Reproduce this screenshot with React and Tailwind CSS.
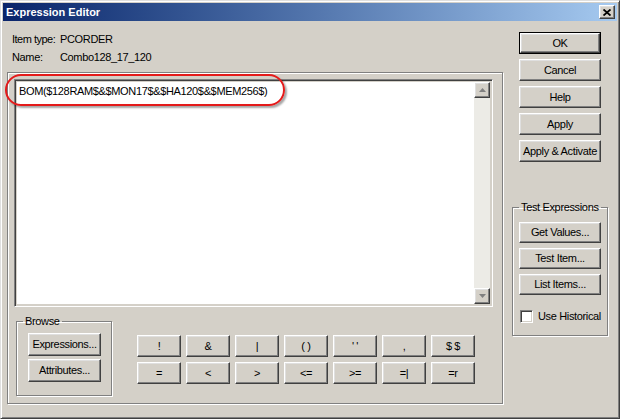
import React from "react";

const raised =
  "bg-[#d4d0c8] border border-t-white border-l-white border-r-[#404040] border-b-[#404040] shadow-[inset_-1px_-1px_0_#808080,inset_1px_1px_0_#dfdfdf]";

const Btn = ({ children, className = "" }) => (
  <div
    className={`${raised} flex items-center justify-center text-[11px] text-black leading-none whitespace-nowrap ${className}`}
  >
    {children}
  </div>
);

// etched group box, like a win32 GROUPBOX
const Group = ({ title, className = "", children }) => (
  <fieldset
    className={`border border-[#808080] shadow-[1px_1px_0_#fff,inset_1px_1px_0_#fff] min-w-0 ${className}`}
  >
    <legend className="ml-[6px] px-[2px] text-[11px] leading-[13px] text-black whitespace-nowrap">
      {title}
    </legend>
    {children}
  </fieldset>
);

const Arrow = ({ up }) => (
  <div className={`${raised} w-[16px] h-[16px] flex items-center justify-center`}>
    <svg width="7" height="4" viewBox="0 0 7 4">
      {up ? (
        <path d="M3.5 0 L7 4 L0 4 Z" fill="#808080" />
      ) : (
        <path d="M0 0 L7 0 L3.5 4 Z" fill="#808080" />
      )}
    </svg>
  </div>
);

const ops = [
  ["!", "&", "|", "( )", "' '", ",", "$ $"],
  ["=", "<", ">", "<=", ">=", "=|", "=r"],
];

export default function App() {
  return (
    <div
      className="relative w-[620px] h-[419px] bg-[#d4d0c8] border border-t-[#dfdfdf] border-l-[#dfdfdf] border-r-[#404040] border-b-[#404040] shadow-[inset_1px_1px_0_#fff,inset_-1px_-1px_0_#808080] p-[2px] flex flex-col tracking-[-0.35px]"
      style={{ fontFamily: '"Liberation Sans", Arial, sans-serif' }}
    >
      {/* title bar */}
      <div className="h-[18px] flex items-center justify-between pl-[3px] pr-[2px] bg-gradient-to-r from-[#0a246a] to-[#a6caf0]">
        <span className="text-white font-bold text-[11px] tracking-normal">Expression Editor</span>
        <div className={`${raised} w-[16px] h-[14px] flex items-center justify-center`}>
          <svg width="8" height="7" viewBox="0 0 8 7">
            <path d="M0.5 0.5 L7.5 6.5 M7.5 0.5 L0.5 6.5" stroke="#000" strokeWidth="1.8" />
          </svg>
        </div>
      </div>

      <div className="flex flex-1">
        {/* left column */}
        <div className="w-[500px] flex flex-col pl-[4px]">
          <div className="mt-[9px] pl-[5px] text-[11px] text-black whitespace-nowrap">
            <div className="flex h-[18px] items-center">
              <span className="w-[48px] shrink-0 tracking-[-0.5px]">Item type:</span>
              <span>PCORDER</span>
            </div>
            <div className="flex h-[18px] items-center">
              <span className="w-[48px] shrink-0">Name:</span>
              <span>Combo128_17_120</span>
            </div>
          </div>

          <div className="mt-[6px] w-[496px] h-[332px] border border-[#808080] shadow-[1px_1px_0_#fff,inset_1px_1px_0_#fff] pt-[6px] pl-[6px]">
            {/* text box */}
            <div className="w-[479px] h-[228px] flex border border-t-[#808080] border-l-[#808080] border-r-white border-b-white shadow-[inset_1px_1px_0_#404040,inset_-1px_-1px_0_#d4d0c8] p-[2px]">
              <div className="flex-1 bg-white pl-[2px] pt-[1px] text-[11px] text-black">
                BOM($128RAM$&$MON17$&$HA120$&$MEM256$)
              </div>
              <div className="w-[16px] flex flex-col bg-[#ecebe6]">
                <Arrow up />
                <div className="flex-1" />
                <Arrow />
              </div>
            </div>

            <div className="flex mt-[8px]">
              <Group title="Browse" className="ml-[2px] w-[96px] h-[81px]">
                <div className="flex flex-col gap-[3px] pl-[11px] pt-[5px]">
                  <Btn className="w-[73px] h-[23px]">Expressions...</Btn>
                  <Btn className="w-[73px] h-[23px]">Attributes...</Btn>
                </div>
              </Group>

              <div className="ml-[25px] mt-[20px] flex flex-col gap-[5px]">
                {ops.map((row, i) => (
                  <div key={i} className="flex gap-[5px]">
                    {row.map((o) => (
                      <Btn key={o} className="w-[44px] h-[22px]">
                        {o}
                      </Btn>
                    ))}
                  </div>
                ))}
              </div>
            </div>
          </div>
        </div>

        {/* right column */}
        <div className="flex-1 flex flex-col">
          <div className="ml-[16px] mt-[11px] flex flex-col gap-[5px]">
            <div className="w-[82px] h-[22px] border border-black">
              <Btn className="w-full h-full">OK</Btn>
            </div>
            <Btn className="w-[82px] h-[22px]">Cancel</Btn>
            <Btn className="w-[82px] h-[22px]">Help</Btn>
            <Btn className="w-[82px] h-[22px]">Apply</Btn>
            <Btn className="w-[82px] h-[22px]">Apply &amp; Activate</Btn>
          </div>

          <Group title="Test Expressions" className="ml-[9px] mt-[39px] w-[96px] h-[135px]">
            <div className="flex flex-col gap-[5px] pl-[6px] pt-[8px]">
              <Btn className="w-[82px] h-[21px]">Get Values...</Btn>
              <Btn className="w-[82px] h-[21px]">Test Item...</Btn>
              <Btn className="w-[82px] h-[21px]">List Items...</Btn>
            </div>
            <div className="flex items-center mt-[13px] ml-[7px] gap-[5px] text-[11px] text-black whitespace-nowrap">
              <div className="w-[13px] h-[13px] bg-white border border-t-[#808080] border-l-[#808080] border-r-white border-b-white shadow-[inset_1px_1px_0_#404040,inset_-1px_-1px_0_#d4d0c8]" />
              <span>Use Historical</span>
            </div>
          </Group>
        </div>
      </div>

      {/* red annotation */}
      <div className="absolute left-[4px] top-[73px] w-[280px] h-[32px] border-2 border-[#e41a1a] rounded-[16px] shadow-[2px_2px_2px_rgba(0,0,0,0.35)] pointer-events-none" />
    </div>
  );
}
